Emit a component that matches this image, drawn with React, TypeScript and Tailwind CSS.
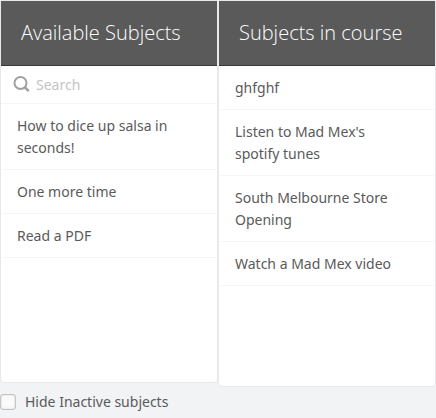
import type { ReactNode } from "react";

const available = ["How to dice up salsa in seconds!", "One more time", "Read a PDF"];

const inCourse = [
  "ghfghf",
  "Listen to Mad Mex's spotify tunes",
  "South Melbourne Store Opening",
  "Watch a Mad Mex video",
];

function Panel({ title, children }: { title: string; children: ReactNode }) {
  return (
    <section className="min-w-0 flex-1 overflow-hidden rounded-b-sm border border-[#e7e8e9] bg-white">
      <h2 className="border-b border-[#383838] bg-[#5a5a5a] px-5 py-4 font-['Open_Sans',sans-serif] text-[20px] leading-8 font-[350] text-white">
        {title}
      </h2>
      {children}
    </section>
  );
}

function SubjectList({ items }: { items: string[] }) {
  return (
    <ul className="px-px">
      {items.map((item) => (
        <li key={item} className="border-b border-[#f5f5f5] pt-[11px] pr-8 pb-[10px] pl-[15px]">
          {item}
        </li>
      ))}
    </ul>
  );
}

export default function App() {
  return (
    <main className="min-h-screen bg-[#f2f3f5] font-['Noto_Sans','Open_Sans',sans-serif] text-[14px] leading-[22px] text-[#5a5a5a]">
      <div className="grid h-[387px] grid-cols-2">
        <div className="flex min-w-0 pb-1">
          <Panel title="Available Subjects">
            <label className="flex h-[38px] items-center gap-1.5 border-b border-[#f5f5f5] px-3">
              <svg
                className="size-[17px] shrink-0"
                viewBox="0 0 17 17"
                fill="none"
                stroke="#a0a0a0"
                strokeWidth="2"
                aria-hidden="true"
              >
                <circle cx="7.5" cy="7" r="6" />
                <path d="M11.7 11.2l4 4" strokeWidth="2.6" />
              </svg>
              <input
                type="search"
                aria-label="Search"
                placeholder="Search"
                className="min-w-0 flex-1 bg-transparent outline-none placeholder:text-[#c4c4c4]"
              />
            </label>
            <SubjectList items={available} />
          </Panel>
        </div>
        <Panel title="Subjects in course">
          <SubjectList items={inCourse} />
        </Panel>
      </div>
      <label className="flex items-center gap-[9px] pt-1">
        <input
          type="checkbox"
          className="size-4 appearance-none rounded-[3px] border border-[#c3c3c3] bg-[#fafafa] shadow-[inset_0_0_2px_#cccccc] checked:bg-[#5a5a5a]"
        />
        Hide Inactive subjects
      </label>
    </main>
  );
}
